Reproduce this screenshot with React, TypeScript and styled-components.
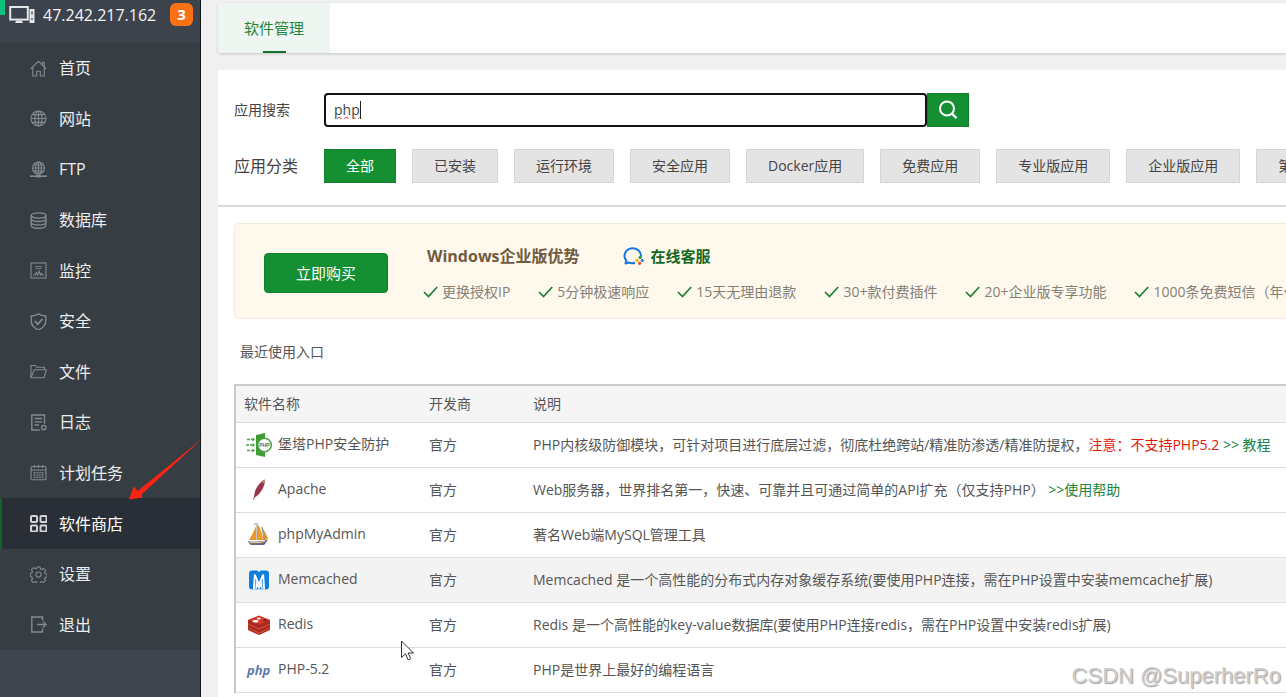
import React from "react";
import styled, { createGlobalStyle } from "styled-components";

const Global = createGlobalStyle`
  *, *::before, *::after { box-sizing: border-box; }
  body {
    margin: 0;
    background: #f0f0f0;
    color: #555;
    font: 14px/20px "Open Sans", "Noto Sans CJK SC", sans-serif;
  }
  button, input { font: inherit; color: inherit; }
  a { color: inherit; text-decoration: none; }
  svg { display: block; flex: none; }
`;

const Shell = styled.div`
  position: relative;
  display: flex;
  min-height: 100vh;
  overflow: hidden;
`;

/* ---------- sidebar ---------- */

const Sidebar = styled.aside`
  flex: none;
  width: 201px;
  background: #3f454f;
  border-right: 1px solid #10161d;
  color: #f2f3f5;
`;

const Host = styled.div`
  position: relative;
  display: flex;
  align-items: center;
  height: 43px;
  padding: 0 7px 14px 9px;
  background: #3c434c;
  font-size: 16px;
  white-space: nowrap;
`;

const StatusMark = styled.span`
  position: absolute;
  left: 0;
  top: 0;
  width: 5px;
  height: 15px;
  background: #0fc27f;
`;

const HostName = styled.span`
  flex: 1;
  margin-left: 8px;
`;

const Count = styled.span`
  width: 23px;
  height: 23px;
  border-radius: 6px;
  background: #fd7116;
  color: #fff;
  font-size: 15px;
  font-weight: 700;
  line-height: 22px;
  text-align: center;
`;

const Menu = styled.nav`
  display: grid;
  grid-auto-rows: 1fr;
  min-height: 607px;
  background: #363d43;
`;

const MenuItem = styled.a<{ $active?: boolean }>`
  display: flex;
  align-items: center;
  gap: 12px;
  padding-left: 28px;
  border-left: 2px solid ${(p) => (p.$active ? "#14632c" : "transparent")};
  background: ${(p) => (p.$active ? "#2a2f37" : "transparent")};
  color: ${(p) => (p.$active ? "#fff" : "#eceef0")};
  font-size: 16px;

  svg { color: ${(p) => (p.$active ? "#d2d4da" : "#858a8e")}; }
`;

const HostIcon = () => (
  <svg width="26" height="20" viewBox="0 0 26 20" fill="none">
    <rect x="1.2" y="2" width="17.6" height="12.6" stroke="#e4e6ea" strokeWidth="2" />
    <path d="M6 18h8l-1.4-2.4H7.4z" fill="#e4e6ea" />
    <rect x="20.5" y="4" width="5" height="14" rx=".5" fill="#e4e6ea" />
    <path d="M23 6.5v3M23 13v2" stroke="#3c434c" strokeWidth="1.2" />
  </svg>
);

const menuIcons: Record<string, React.ReactNode> = {
  home: (
    <>
      <path d="M.7 9 8.5 1.3 16.300 9" />
      <path d="M2.800 7.200V16h3.900v-4.800h3.600V16h3.900V7.200" />
      <path d="M12.200 4.800V2.200h2v4.600" />
    </>
  ),
  site: (
    <>
      <circle cx="8.500" cy="8.500" r="7.500" />
      <ellipse cx="8.500" cy="8.500" rx="3.600" ry="7.500" />
      <path d="M8.500 1v15M1 8.500h15M2.300 4.600h12.400M2.300 12.400h12.400" />
    </>
  ),
  ftp: (
    <>
      <circle cx="8.500" cy="7" r="6" />
      <ellipse cx="8.500" cy="7" rx="2.900" ry="6" />
      <path d="M8.500 1v12M2.500 7h12M3.500 4h10M3.500 10h10" />
      <path d="M0 15.200h17" strokeWidth="1.600" />
      <path d="M6.500 15.200h4" strokeWidth="2.600" />
    </>
  ),
  data: (
    <g strokeWidth="1.400">
      <ellipse cx="8.500" cy="3.500" rx="7.300" ry="2.600" />
      <path d="M1.200 3.500v10c0 1.500 3.200 2.700 7.300 2.700s7.300-1.200 7.300-2.700v-10" />
      <path d="M1.200 6.800c0 1.500 3.200 2.700 7.300 2.700s7.300-1.200 7.300-2.700M1.200 10.200c0 1.500 3.200 2.700 7.300 2.700s7.300-1.200 7.300-2.700" />
    </g>
  ),
  monitor: (
    <>
      <rect x="1" y="1" width="15" height="15" />
      <path d="M5 4.500h7M5.500 6.500h6" strokeWidth=".8" />
      <path d="M3 13h2l1.300-2.500L7.600 13l1.500-4 1.400 4 1.200-1.600.9 1.600h1.600" />
    </>
  ),
  shield: (
    <>
      <path d="M8.500.8c2.400 1.500 4.600 2 7.300 2.200v5c0 4.200-3 7-7.300 9-4.300-2-7.300-4.800-7.300-9V3C3.900 2.800 6.100 2.300 8.500.8z" strokeWidth="1.400" />
      <path d="m4.800 8.200 2.900 3 4.800-5.200" strokeWidth="1.700" />
    </>
  ),
  folder: (
    <>
      <path d="M1 14.500V2.500h4.500l1.300 1.800h7.700v2.400" />
      <path d="M1 14.700 4.200 6.700h12.300l-2.600 8z" />
    </>
  ),
  log: (
    <>
      <path d="M9.800 16H1.800V1h12.700v8.800" strokeWidth="1.400" />
      <path d="M4.500 4.500h7.500M4.500 7.800h7.500M4.500 11h4.500" strokeWidth="1.300" />
      <circle cx="13.800" cy="13.600" r="2.200" strokeWidth="1.400" />
    </>
  ),
  task: (
    <>
      <rect x="1" y="2.500" width="15" height="13.300" rx="1" />
      <path d="M1 6h15M4.500 1v3M8.500 1v3M12.500 1v3" />
      <path d="M4.500 8v6M7.200 8v6M9.900 8v6M12.600 8v6M3 8.500h11M3 11h11M3 13.500h11" strokeWidth=".6" />
    </>
  ),
  store: (
    <g strokeWidth="2">
      <rect x="1" y="1" width="6" height="6" rx="1" />
      <rect x="10.500" y="1" width="6" height="6" rx="1" />
      <rect x="1" y="10.500" width="6" height="6" rx="1" />
      <rect x="10.500" y="10.500" width="6" height="6" rx="1" />
    </g>
  ),
  gear: (
    <>
      <path d="M7 1h3l.5 2 1.200.5 1.800-1.100 2.100 2.100-1.100 1.800.5 1.200 2 .5v3l-2 .5-.5 1.200 1.100 1.800-2.100 2.100-1.800-1.100-1.200.5-.5 1.500H7l-.5-1.500-1.200-.5-1.800 1.100-2.100-2.100 1.100-1.800L2 11.500.3 10V7L2 6.700l.5-1.200-1.100-1.800 2.100-2.100 1.800 1.100L6.500 2.500z" />
      <circle cx="8.500" cy="8.600" r="2.600" />
    </>
  ),
  exit: (
    <>
      <path d="M12.500 4.500V1H1.800v15h10.700v-3.500" strokeWidth="1.400" />
      <path d="M7 8.500h9M13 5.500l3 3-3 3" strokeWidth="1.300" />
    </>
  ),
};

const MenuIcon = ({ name }: { name: string }) => (
  <svg width="17" height="17" viewBox="0 0 17 17" fill="none" stroke="currentColor" strokeWidth="1.100" aria-hidden>
    {menuIcons[name]}
  </svg>
);

const menu = [
  ["home", "首页"],
  ["site", "网站"],
  ["ftp", "FTP"],
  ["data", "数据库"],
  ["monitor", "监控"],
  ["shield", "安全"],
  ["folder", "文件"],
  ["log", "日志"],
  ["task", "计划任务"],
  ["store", "软件商店"],
  ["gear", "设置"],
  ["exit", "退出"],
];

/* ---------- main column ---------- */

const Main = styled.main`
  display: flex;
  flex: 1;
  flex-direction: column;
  min-width: 0;
  padding: 3px 0 0 17px;
`;

const TabBar = styled.div`
  display: flex;
  height: 50px;
  margin-bottom: 17px;
  border-radius: 4px 0 0 4px;
  background: #fff;
  box-shadow: 0 1px 3px rgba(0, 0, 0, 0.18);
`;

const Tab = styled.button`
  position: relative;
  width: 112px;
  padding: 0;
  border: 0;
  border-radius: 4px 0 0 4px;
  background: #eff5f0;
  color: #23843a;
  font-size: 15px;

  &::after {
    content: "";
    position: absolute;
    left: 45px;
    bottom: 0;
    width: 23px;
    height: 2px;
    background: #10752b;
  }
`;

const Filters = styled.section`
  display: flex;
  flex-direction: column;
  gap: 22px;
  padding: 23px 0 22px 16px;
  border-bottom: 2px solid #d9d9d9;
  background: #fff;
`;

const FilterRow = styled.div`
  display: flex;
  align-items: center;
  height: 34px;
  white-space: nowrap;
`;

const SearchLabel = styled.label`
  flex: none;
  width: 90px;
  color: #444;
`;

const GroupLabel = styled.span`
  flex: none;
  width: 90px;
  color: #444;
  font-size: 16px;
`;

const Field = styled.div`
  position: relative;
  flex: 0 1 603px;
  height: 34px;
`;

const SearchInput = styled.input`
  width: 100%;
  height: 100%;
  padding: 0 8px 2px;
  border: 2px solid #111;
  border-radius: 4px;
  outline: 0;
  background: #fff;
  color: #444;
  font-size: 14px;
  text-decoration: underline wavy #e0262b 1px;
`;

const Caret = styled.span`
  position: absolute;
  left: 36px;
  top: 8px;
  width: 1px;
  height: 18px;
  background: #222;
`;

const SearchButton = styled.button`
  display: grid;
  place-items: center;
  flex: none;
  width: 42px;
  height: 34px;
  padding: 0;
  border: 1px solid #117f2c;
  background: #148f31;
  color: #fff;
`;

const Categories = styled.div`
  display: flex;
  gap: 16px;
`;

const Category = styled.button<{ $active?: boolean }>`
  flex: none;
  height: 34px;
  padding: 0 21px;
  border: 1px solid ${(p) => (p.$active ? "#117f2c" : "#d6d6d6")};
  background: ${(p) => (p.$active ? "#148f31" : "#e4e4e4")};
  color: ${(p) => (p.$active ? "#fff" : "#444")};
`;

const Body = styled.section`
  flex: 1;
  padding: 16px 0 0 16px;
  background: #fff;
`;

const Banner = styled.div`
  display: flex;
  align-items: center;
  height: 96px;
  padding: 4px 0 0 29px;
  border: 1px solid #f1eadd;
  border-right: 0;
  border-radius: 5px 0 0 5px;
  background: #fef8ed;
`;

const BuyButton = styled.button`
  flex: none;
  width: 124px;
  height: 40px;
  margin-right: 35px;
  padding: 0;
  border: 1px solid #117f2c;
  border-radius: 4px;
  background: #148f31;
  color: #fff;
  font-size: 15px;
`;

const Pitch = styled.div`
  display: flex;
  flex-direction: column;
  gap: 16px;
  padding-top: 2px;
  white-space: nowrap;
`;

const PitchHead = styled.div`
  display: flex;
  align-items: center;
  gap: 42px;
  padding-left: 4px;
`;

const PitchTitle = styled.strong`
  color: #6f5c40;
  font-size: 16px;
`;

const Support = styled.a`
  display: flex;
  align-items: center;
  gap: 7px;
  color: #14691f;
  font-size: 15px;
  font-weight: 700;
`;

const Perks = styled.ul`
  display: flex;
  gap: 28px;
  margin: 0;
  padding: 0;
  list-style: none;
`;

const Perk = styled.li`
  display: flex;
  align-items: center;
  gap: 4px;
  color: #857f76;
`;

const Recent = styled.h2`
  margin: 0;
  padding: 23px 0 22px 6px;
  color: #555;
  font-size: 14px;
  font-weight: 400;
  line-height: 20px;
`;

const TableFrame = styled.div`
  border-top: 2px solid #cbcbcb;
  border-left: 2px solid #c8c8c8;
`;

const Table = styled.table`
  width: 100%;
  border-collapse: separate;
  border-spacing: 0;
  table-layout: fixed;
  white-space: nowrap;
`;

const HeadCell = styled.th<{ $width?: number }>`
  width: ${(p) => (p.$width ? `${p.$width}px` : "auto")};
  height: 37px;
  padding: 0 0 0 8px;
  border-bottom: 1px solid #ddd;
  background: #f5f5f5;
  font-weight: 400;
  text-align: left;
`;

const Row = styled.tr<{ $hover?: boolean }>`
  background: ${(p) => (p.$hover ? "#f3f3f3" : "#fff")};
`;

const Cell = styled.td`
  height: 45px;
  padding: 0 0 0 8px;
  border-bottom: 1px solid #ddd;
`;

const AppName = styled.div`
  display: flex;
  align-items: center;
  gap: 6px;
  padding-left: 2px;
`;

const AppLabel = styled.span`
  padding-bottom: 2px;
`;

const Warning = styled.span`
  color: #e3170a;
`;

const GuideLink = styled.a`
  color: #20843c;
`;

const appIcons: Record<string, React.ReactNode> = {
  guard: (
    <>
      <path d="M10 3 19 1v24l-9-2z" fill="#3f9c34" />
      <circle cx="18.500" cy="13" r="6.800" fill="#fff" stroke="#4ca341" strokeWidth="1.500" />
      <text x="18.500" y="15" textAnchor="middle" fontSize="5" fontWeight="700" fill="#666" fontFamily="Liberation Sans, sans-serif">PHP</text>
      <path d="M1 7.500h7M0 13h7M1 18.500h7" stroke="#4ca341" strokeWidth="1.400" strokeDasharray="3 1" />
      <path d="m6.500 5.500 2.500 2-2.500 2zM6.500 11l2.500 2-2.500 2zM6.500 16.500l2.500 2-2.500 2z" fill="#4ca341" />
    </>
  ),
  apache: (
    <>
      <path d="M18.700 2.500c.8 3.800-1 8-3.400 11.500-2 3-4.500 5.700-6.900 6.200-.4-3.200.5-7 3-10.700C13.500 6.200 16.200 3.500 18.700 2.500z" fill="#a5364f" />
      <path d="M16 5c1.400-1.500 2.100-2 2.700-2.500.3 1.500.2 2.900 0 4.200z" fill="#b79a78" />
      <path d="M17 6c-4 5-7 10-9.500 16.500" fill="none" stroke="#70404f" strokeWidth="1" />
    </>
  ),
  pma: (
    <>
      <path d="M10 4C8 9 6 13 3 18h7z" fill="#e99a24" />
      <path d="M11.500 2c-.5 6-.8 11-.5 16h6C16.500 12 14.500 6 11.500 2z" fill="#f29b1d" />
      <path d="M15 4c3 4 5.500 8 7 13l-4 1c0-5-1-9-3-14z" fill="#d8932e" />
      <path d="M8 3c1-2 3-1.500 4-.5M11 3v15M16 5l2 13" stroke="#8f8f9d" strokeWidth="1" fill="none" />
      <path d="M2 19c6 1.500 13 .6 20-1.500-1.500 2.500-3 4.800-4 5.500H5c-1.500-1-2.500-2-3-4z" fill="#646687" />
      <path d="M3 20.300c6 1 11 .5 16-1" stroke="#e9c18a" strokeWidth="1.100" fill="none" />
    </>
  ),
  memcached: (
    <>
      <path d="M6 3.500h4.500c1.200 0 1.800.6 2.500 1.800.7-1.200 1.300-1.800 2.500-1.800H20c2 0 3 1 3 3v13c0 2-1 3-3 3H6c-2 0-3-1-3-3v-13c0-2 1-3 3-3z" fill="#0f7fdc" />
      <path d="m7.800 22.500 1-15 4.200 10 4.200-10 1 15" fill="none" stroke="#fff" strokeWidth="1.800" />
      <path d="m10 13 3 6.500 3-6.500.7 9.500H9.300z" fill="#fff" />
      <circle cx="11.500" cy="21.300" r="1" fill="#0f7fdc" />
      <circle cx="14.500" cy="21.300" r="1" fill="#0f7fdc" />
    </>
  ),
  redis: (
    <>
      <path d="m2 8 11-4 11 4v10l-11 5-11-5z" fill="#a82a20" />
      <path d="m2 8 11-4.500L24 8l-11 4.800z" fill="#d0392c" />
      <path d="m2 12 11 5 11-5M2 16l11 5 11-5" stroke="#d5493c" strokeWidth="1.300" fill="none" />
      <ellipse cx="9.500" cy="9.200" rx="3" ry="1.200" fill="#fff" />
      <path d="m11 5.300 1.500.6 1.700-.7-.3 1.100 1.700.5-2.100.5-.5 1-.8-1-2-.2 1.400-.6z" fill="#fff" />
      <path d="m16.500 8.300 2.500-1 2.500 1-2.500 1z" fill="#7a130c" />
    </>
  ),
  php: (
    <text x="1" y="18" fontSize="13" fontWeight="700" fontStyle="italic" fill="#5f79ad" fontFamily="Open Sans, sans-serif">php</text>
  ),
};

const AppIcon = ({ name }: { name: string }) => (
  <svg width="26" height="26" viewBox="0 0 26 26" aria-hidden>
    {appIcons[name]}
  </svg>
);

const apps: { icon: string; name: string; text: React.ReactNode; hover?: boolean }[] = [
  {
    icon: "guard",
    name: "堡塔PHP安全防护",
    text: (
      <>
        PHP内核级防御模块，可针对项目进行底层过滤，彻底杜绝跨站/精准防渗透/精准防提权，
        <Warning>注意：不支持PHP5.2</Warning> <GuideLink href="#guide">&gt;&gt; 教程</GuideLink>
      </>
    ),
  },
  {
    icon: "apache",
    name: "Apache",
    text: (
      <>
        Web服务器，世界排名第一，快速、可靠并且可通过简单的API扩充（仅支持PHP） <GuideLink href="#help">&gt;&gt;使用帮助</GuideLink>
      </>
    ),
  },
  { icon: "pma", name: "phpMyAdmin", text: "著名Web端MySQL管理工具" },
  {
    icon: "memcached",
    name: "Memcached",
    text: "Memcached 是一个高性能的分布式内存对象缓存系统(要使用PHP连接，需在PHP设置中安装memcache扩展)",
    hover: true,
  },
  { icon: "redis", name: "Redis", text: "Redis 是一个高性能的key-value数据库(要使用PHP连接redis，需在PHP设置中安装redis扩展)" },
  { icon: "php", name: "PHP-5.2", text: "PHP是世界上最好的编程语言" },
];

const categories = ["全部", "已安装", "运行环境", "安全应用", "Docker应用", "免费应用", "专业版应用", "企业版应用", "第三方应用"];

const perks = ["更换授权IP", "5分钟极速响应", "15天无理由退款", "30+款付费插件", "20+企业版专享功能", "1000条免费短信（年付）"];

/* ---------- overlays ---------- */

const Arrow = styled.svg`
  position: absolute;
  left: 128px;
  top: 436px;
  pointer-events: none;
`;

const Pointer = styled.svg`
  position: absolute;
  left: 400px;
  top: 640px;
  pointer-events: none;
`;

const Watermark = styled.span`
  position: absolute;
  right: 5px;
  bottom: 5px;
  color: #cdcdcd;
  font: 22px/32px "Liberation Sans", sans-serif;
  text-shadow: 1px 1px 1px #a0a0a0;
  pointer-events: none;
`;

export default function App() {
  return (
    <Shell>
      <Global />
      <Sidebar>
        <Host>
          <StatusMark />
          <HostIcon />
          <HostName>47.242.217.162</HostName>
          <Count>3</Count>
        </Host>
        <Menu>
          {menu.map(([icon, label]) => (
            <MenuItem key={icon} href={`#${icon}`} $active={icon === "store"}>
              <MenuIcon name={icon} />
              {label}
            </MenuItem>
          ))}
        </Menu>
      </Sidebar>

      <Main>
        <TabBar>
          <Tab type="button">软件管理</Tab>
        </TabBar>

        <Filters>
          <FilterRow>
            <SearchLabel htmlFor="search">应用搜索</SearchLabel>
            <Field>
              <SearchInput id="search" type="text" defaultValue="php" />
              <Caret />
            </Field>
            <SearchButton type="button" aria-label="搜索">
              <svg width="20" height="20" viewBox="0 0 20 20" fill="none" stroke="currentColor" strokeWidth="2">
                <circle cx="9" cy="8.500" r="7" />
                <path d="m13.800 13.500 4.700 4.700" strokeWidth="2.400" />
              </svg>
            </SearchButton>
          </FilterRow>
          <FilterRow>
            <GroupLabel>应用分类</GroupLabel>
            <Categories>
              {categories.map((name, i) => (
                <Category key={name} type="button" $active={i === 0}>
                  {name}
                </Category>
              ))}
            </Categories>
          </FilterRow>
        </Filters>

        <Body>
          <Banner>
            <BuyButton type="button">立即购买</BuyButton>
            <Pitch>
              <PitchHead>
                <PitchTitle>Windows企业版优势</PitchTitle>
                <Support href="#support">
                  <svg width="22" height="20" viewBox="0 0 22 20" fill="none" aria-hidden>
                    <path d="M18.800 11.200A8.200 7.600 0 1 0 4.300 14.500L3.500 17.500 6.500 16.500c2 .8 4.500.9 6.500.2" stroke="#1878e0" strokeWidth="2" strokeLinejoin="round" />
                    <circle cx="18" cy="11.500" r="1.600" fill="#23a048" />
                    <circle cx="20.200" cy="14.500" r="1.500" fill="#1878e0" />
                    <circle cx="17.600" cy="17.300" r="1.600" fill="#e8502c" />
                    <circle cx="15" cy="14.500" r="1.700" fill="#f7b91c" />
                  </svg>
                  在线客服
                </Support>
              </PitchHead>
              <Perks>
                {perks.map((perk) => (
                  <Perk key={perk}>
                    <svg width="15" height="12" viewBox="0 0 15 12" fill="none" stroke="#1c8034" strokeWidth="1.700" aria-hidden>
                      <path d="m1 6 4.500 4.500L14.200 1" />
                    </svg>
                    {perk}
                  </Perk>
                ))}
              </Perks>
            </Pitch>
          </Banner>

          <Recent>最近使用入口</Recent>

          <TableFrame>
            <Table>
              <thead>
                <tr>
                  <HeadCell $width={185}>软件名称</HeadCell>
                  <HeadCell $width={104}>开发商</HeadCell>
                  <HeadCell>说明</HeadCell>
                </tr>
              </thead>
              <tbody>
                {apps.map((app) => (
                  <Row key={app.name} $hover={app.hover}>
                    <Cell>
                      <AppName>
                        <AppIcon name={app.icon} />
                        <AppLabel>{app.name}</AppLabel>
                      </AppName>
                    </Cell>
                    <Cell>官方</Cell>
                    <Cell>{app.text}</Cell>
                  </Row>
                ))}
              </tbody>
            </Table>
          </TableFrame>
        </Body>
      </Main>

      <Arrow width="78" height="66" viewBox="0 0 78 66" aria-hidden>
        <path d="M1 63.500 5.700 50.500 9.700 55 75 2 13.500 58.500 14.500 61.500z" fill="#fb2414" />
      </Arrow>
      <Pointer width="15" height="22" viewBox="0 0 15 22" aria-hidden>
        <path d="M1.500 1v16.500l4-3.600 2.600 6 2.700-1.200-2.600-5.700h5.300z" fill="#fff" stroke="#333" strokeWidth="1" />
      </Pointer>
      <Watermark>CSDN @SuperherRo</Watermark>
    </Shell>
  );
}
